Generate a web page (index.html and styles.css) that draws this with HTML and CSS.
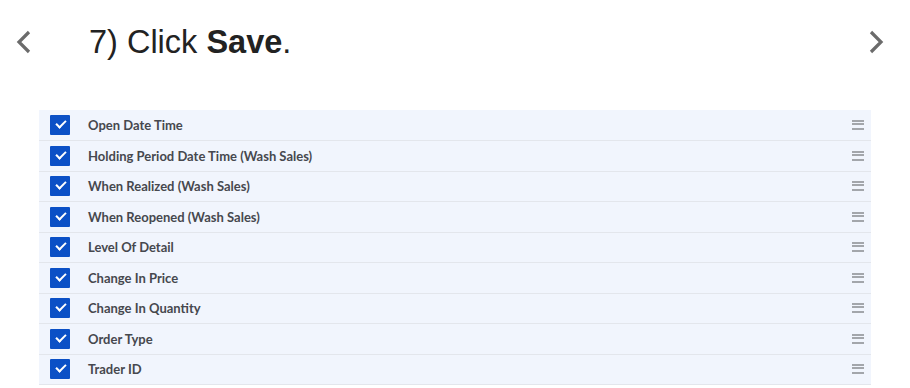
FILE: index.html
```html
<!DOCTYPE html>
<html lang="en">
<head>
    <meta charset="UTF-8">
    <meta name="viewport" content="width=device-width, initial-scale=1.0">
    <title>Step 7 - Click Save</title>
    <link rel="stylesheet" href="styles.css">
</head>
<body>
    <div class="step">
        <button class="nav-btn prev" aria-label="Previous">
            <svg width="16" height="24" viewBox="0 0 16 24"><polyline points="13,2 3,12 13,22" /></svg>
        </button>
        <h1>7) Click <b>Save</b>.</h1>
        <button class="nav-btn next" aria-label="Next">
            <svg width="16" height="24" viewBox="0 0 16 24"><polyline points="3,2 13,12 3,22" /></svg>
        </button>
    </div>

    <ul class="columns">
        <li class="column"><span class="check"></span><span class="label">Open Date Time</span><span class="handle"></span></li>
        <li class="column"><span class="check"></span><span class="label">Holding Period Date Time (Wash Sales)</span><span class="handle"></span></li>
        <li class="column"><span class="check"></span><span class="label">When Realized (Wash Sales)</span><span class="handle"></span></li>
        <li class="column"><span class="check"></span><span class="label">When Reopened (Wash Sales)</span><span class="handle"></span></li>
        <li class="column"><span class="check"></span><span class="label">Level Of Detail</span><span class="handle"></span></li>
        <li class="column"><span class="check"></span><span class="label">Change In Price</span><span class="handle"></span></li>
        <li class="column"><span class="check"></span><span class="label">Change In Quantity</span><span class="handle"></span></li>
        <li class="column"><span class="check"></span><span class="label">Order Type</span><span class="handle"></span></li>
        <li class="column"><span class="check"></span><span class="label">Trader ID</span><span class="handle"></span></li>
    </ul>
</body>
</html>
```

FILE: styles.css
```css
* {
    margin: 0;
    padding: 0;
    box-sizing: border-box;
}

body {
    font-family: "Liberation Sans", Arial, sans-serif;
    background: #fff;
    color: #222;
    overflow: hidden;
}

.step {
    display: flex;
    align-items: center;
    height: 84px;
    padding: 0 0 0 14px;
}

.nav-btn {
    background: none;
    border: none;
    width: 20px;
    height: 26px;
    display: flex;
    align-items: center;
    justify-content: center;
    cursor: pointer;
}

.nav-btn svg polyline {
    fill: none;
    stroke: #6b6b6b;
    stroke-width: 3.2;
}

.nav-btn.next {
    margin-left: auto;
    margin-right: 24px;
}

h1 {
    font-size: 32.5px;
    font-weight: 400;
    margin-left: 55px;
    margin-top: 1px;
    color: #222;
}

h1 b {
    font-weight: 700;
}

.columns {
    list-style: none;
    margin: 26px 0 0 39px;
    width: 832px;
    background: #f1f5fd;
}

.column {
    display: flex;
    align-items: center;
    height: 30.5px;
    padding: 0 7px 0 11px;
    border-bottom: 1px solid #e3e6ec;
}

.column:first-child {
    height: 31px;
}

.check {
    width: 20px;
    height: 20px;
    background: #0b50c6;
    border-radius: 1px;
    position: relative;
    flex-shrink: 0;
}

.check::after {
    content: "";
    position: absolute;
    left: 6px;
    top: 5px;
    width: 8px;
    height: 4px;
    border-left: 2px solid #fff;
    border-bottom: 2px solid #fff;
    transform: rotate(-45deg);
}

.label {
    font-family: Lato, "Open Sans", sans-serif;
    font-size: 13px;
    font-weight: 700;
    color: #46484e;
    margin-left: 18px;
}

.handle {
    margin-left: auto;
    width: 12px;
    height: 10px;
    border-top: 2px solid #a3a6ab;
    border-bottom: 2px solid #a3a6ab;
    position: relative;
}

.handle::after {
    content: "";
    position: absolute;
    left: 0;
    right: 0;
    top: 1px;
    border-top: 2px solid #a3a6ab;
}
```
